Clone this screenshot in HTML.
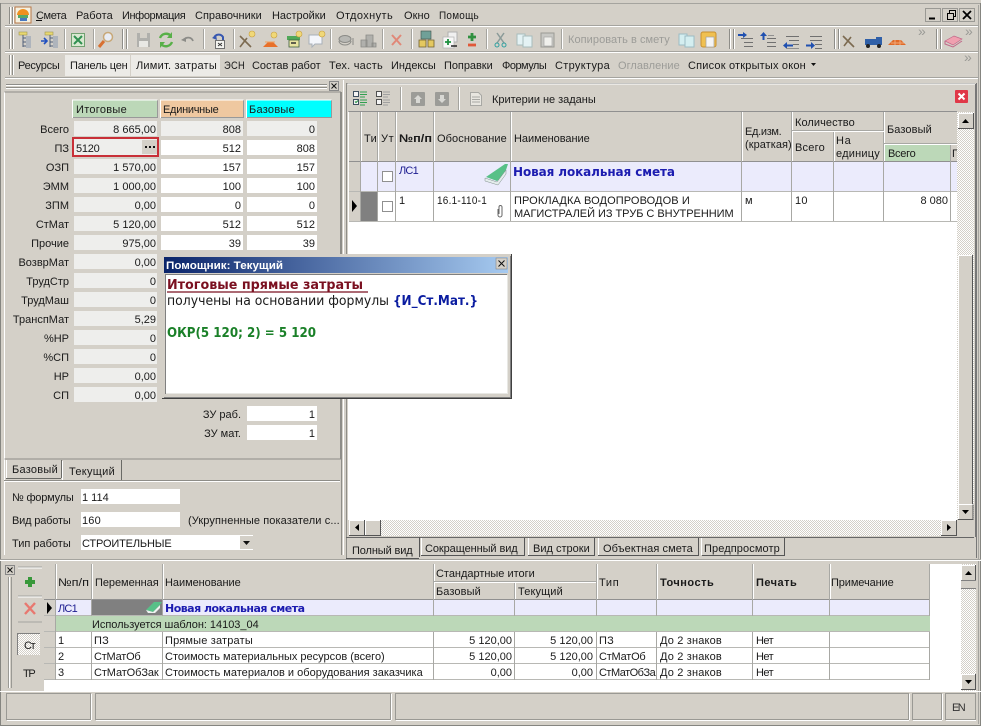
<!DOCTYPE html>
<html><head><meta charset="utf-8"><style>
html,body{margin:0;padding:0;background:#d4d0c8;width:981px;height:726px;overflow:hidden}
svg{display:block}
text{font-family:"Liberation Sans",sans-serif;font-size:11px;letter-spacing:.28px;fill:#1a1a1a;white-space:pre}
.e{text-anchor:end;letter-spacing:0}.b{font-weight:bold}
.d{font-family:"DejaVu Sans",sans-serif;font-size:13px;letter-spacing:0}
.db{font-family:"DejaVu Sans",sans-serif;font-weight:bold;font-size:12px;letter-spacing:0}
</style></head><body>
<svg width="981" height="726" viewBox="0 0 981 726" xmlns="http://www.w3.org/2000/svg">
<defs>
<pattern id="ck" width="2" height="2" patternUnits="userSpaceOnUse"><rect width="2" height="2" fill="#fff"/><rect width="1" height="1" fill="#d4d0c8"/><rect x="1" y="1" width="1" height="1" fill="#d4d0c8"/></pattern>
<linearGradient id="tb"><stop offset="0" stop-color="#0a246a"/><stop offset="1" stop-color="#a6caf0"/></linearGradient>
</defs>
<rect width="981" height="726" fill="#d4d0c8"/>
<!-- window edges -->
<path d="M0 3.500H981" stroke="#a5a49f"/>
<path d="M.5 726V3M980.500 3V726M0 725.500H981" stroke="#858580" fill="none"/>
<path d="M978.500 5V724" stroke="#a5a49f"/>
<!-- toolbar separators -->
<path d="M5 25.500H978M5 51.500H978M5 77.500H978" stroke="#a5a49f"/>
<path d="M5 26.500H978M5 52.500H978M5 78.500H978" stroke="#fff"/>
<!-- grips -->
<path d="M9.500 7V24M12.500 7V24M9.500 29V49M12.500 29V49M122.500 29V49M126.500 29V49M9.500 55V75M12.500 55V75M729.500 29V49M733.500 29V49M834.500 29V49M838.500 29V49M936.500 29V49M940.500 29V49" stroke="#8e8d88" stroke-width="1"/>
<path d="M10.500 7V24M13.500 7V24M10.500 29V49M13.500 29V49M123.500 29V49M127.500 29V49M10.500 55V75M13.500 55V75M730.500 29V49M734.500 29V49M835.500 29V49M839.500 29V49M937.500 29V49M941.500 29V49" stroke="#fff"/>
<!-- logo -->
<rect x="15" y="7" width="16" height="16" fill="#f4f0e0" stroke="#b87848"/>
<path d="M17 15a6 6 0 0 1 12 0z" fill="#f09020"/><path d="M18 15h10v3h-10z" fill="#58a868"/><path d="M20 18h7v3h-7z" fill="#4878c0"/>
<!-- menu -->
<text x="36" y="19" textLength="31">Смета</text><path d="M36 20.500H42" stroke="#111"/>
<text x="76" y="19" textLength="37">Работа</text>
<text x="122" y="19" textLength="64">Информация</text>
<text x="195" y="19" textLength="67">Справочники</text>
<text x="272" y="19" textLength="54">Настройки</text>
<text x="336" y="19" textLength="57">Отдохнуть</text>
<text x="404" y="19" textLength="26">Окно</text>
<text x="439" y="19" textLength="40" lengthAdjust="spacingAndGlyphs">Помощь</text>
<!-- window buttons -->
<g fill="#d4d0c8" stroke="#9a9994"><rect x="925.500" y="8.500" width="15" height="13"/><rect x="942.500" y="8.500" width="15" height="13"/><rect x="959.500" y="8.500" width="15" height="13"/></g>
<path d="M929 18.500h6" stroke="#000" stroke-width="2"/>
<path d="M947.500 13.500h6v6h-6zM949.500 13v-2.500h6v6h-2" stroke="#000" fill="none"/>
<path d="M963 11l8 8M971 11l-8 8" stroke="#000" stroke-width="1.800"/>
<!-- toolbar 1 small seps -->
<path d="M64.500 29V49M93.500 29V49M203.500 29V49M233.500 29V49M330.500 29V49M382.500 29V49M411.500 29V49M486.500 29V49M561.500 29V49" stroke="#a5a49f"/>
<path d="M65.500 29V49M94.500 29V49M204.500 29V49M234.500 29V49M331.500 29V49M383.500 29V49M412.500 29V49M487.500 29V49M562.500 29V49" stroke="#fff"/>
<!-- icons row 1 -->
<g fill="none">
<rect x="19" y="32" width="8" height="3" fill="#e8d870" stroke="#a09850" stroke-width=".6"/><path d="M23 35V47M23 38h3M23 42h3M23 46h3" stroke="#50607a"/><path d="M26 37h5M26 39h5M26 41h5M26 43h5M26 45h5M26 47h5" stroke="#8898b0"/>
<rect x="45" y="32" width="8" height="3" fill="#e8d870" stroke="#a09850" stroke-width=".6"/><path d="M50 35V47M50 38h3M50 42h3M50 46h3" stroke="#50607a"/><path d="M53 37h5M53 39h5M53 41h5M53 43h5M53 45h5M53 47h5" stroke="#8898b0"/><path d="M41 41h5M44 38l3 3-3 3" stroke="#2050c0" stroke-width="1.600"/>
<rect x="71.500" y="33.500" width="13" height="13" fill="#d8e8d0" stroke="#70a070"/><path d="M74 36l8 8M82 36l-8 8" stroke="#309050" stroke-width="2"/>
<circle cx="108" cy="37" r="4.500" fill="#e8ecf4" stroke="#c8a878" stroke-width="1.500"/><path d="M104 41l-5 6" stroke="#d87030" stroke-width="3"/>
<path d="M137 33h13v14h-13z" fill="#b0b0ac"/><rect x="140" y="33" width="7" height="5" fill="#d4d0c8"/><rect x="139" y="41" width="9" height="6" fill="#e8e8e4"/>
<path d="M160 38a6.500 6.500 0 0 1 11-2M172 42a6.500 6.500 0 0 1-11 2" stroke="#58b048" stroke-width="2.400"/><path d="M172 32v6h-5zM160 48v-6h5z" fill="#58b048"/>
<path d="M184 40a5 5 0 0 1 9 1" stroke="#8c8c88" stroke-width="1.800"/><path d="M181 40l5-3v5z" fill="#8c8c88"/>
<path d="M214 38a5 5 0 0 1 9-1v4" stroke="#3858b0" stroke-width="2"/><path d="M212 38l4-3 1 5z" fill="#3858b0"/><rect x="215.500" y="40.500" width="9" height="8" fill="#f4f4f0" stroke="#707070"/><path d="M218 43l4 3M222 43l-4 3" stroke="#333"/>
<path d="M240 36l11 11M240 47l7-9" stroke="#7c6a50" stroke-width="1.600"/><circle cx="252" cy="34" r="3" fill="#f0d878" stroke="#c8a040" stroke-width=".6"/>
<path d="M263 47l5-5h5l5 5z" fill="#e8702a"/><path d="M265 42h10" stroke="#f0a060"/><circle cx="274" cy="35" r="3" fill="#f0d878" stroke="#c8a040" stroke-width=".6"/>
<rect x="287" y="36" width="13" height="4" fill="#50a858"/><rect x="289" y="40" width="10" height="7" fill="#e8e4a0" stroke="#406040" stroke-width=".8"/><path d="M291 43h5" stroke="#333" stroke-width="1.500"/><circle cx="299" cy="34" r="3" fill="#f0d878" stroke="#c8a040" stroke-width=".6"/>
<path d="M309 35h13v9h-7l-3 3v-3h-3z" fill="#f4f6fb" stroke="#a8b0b8"/><circle cx="322" cy="34" r="3" fill="#f0d878" stroke="#c8a040" stroke-width=".6"/>
<ellipse cx="345" cy="39" rx="6" ry="3.500" fill="#b8b8b4" stroke="#8a8a86"/><path d="M339 41a6 4 0 0 0 12 0M353 38v7" stroke="#8a8a86"/>
<path d="M361 40h6v7h-6zM366 35h7v12h-7zM372 43h4v4h-4z" fill="#b0b0ac" stroke="#8a8a86" stroke-width=".8"/>
<path d="M392 35l9 10M401 35l-9 10" stroke="#e08878" stroke-width="2"/>
<rect x="421" y="31" width="10" height="8" fill="#70a098" stroke="#405048" stroke-width=".6"/><path d="M419 40h7v7h-7zM428 40h6v7h-6z" fill="#e4c860" stroke="#706030" stroke-width=".8"/>
<rect x="448" y="32" width="9" height="10" fill="#f0f0f0" stroke="#b0b0b0"/><rect x="443" y="37" width="11" height="11" fill="#f8f8f8" stroke="#b0b0b0" stroke-width=".7"/><path d="M445 42h6M448 39v6" stroke="#209040" stroke-width="1.800"/><path d="M451 46h6" stroke="#303030" stroke-width="1.600"/>
<path d="M468 37h8M472 33v8" stroke="#309040" stroke-width="2.800"/><path d="M468 45h8" stroke="#e05838" stroke-width="2.800"/>
<path d="M497 33l7 10M504 33l-7 10" stroke="#8a9a98" stroke-width="1.500"/><circle cx="497" cy="45" r="2" stroke="#30a0a0"/><circle cx="504" cy="45" r="2" stroke="#30a0a0"/>
<rect x="517" y="34" width="8" height="11" fill="#e4f2f4" stroke="#a8bcbc"/><rect x="523" y="36" width="9" height="11" fill="#e4f2f4" stroke="#a8bcbc"/>
<rect x="541" y="33" width="13" height="14" fill="#c8c8c4" stroke="#9a9a95"/><rect x="544" y="37" width="8" height="9" fill="#f0f0ec" stroke="#a5a5a5" stroke-width=".7"/>
<rect x="679" y="34" width="8" height="11" fill="#d4eef0" stroke="#9cbcc4"/><rect x="685" y="36" width="9" height="11" fill="#d4eef0" stroke="#9cbcc4"/>
<rect x="701" y="32" width="15" height="15" rx="2" fill="#f0c050" stroke="#c89030"/><rect x="706" y="37" width="8" height="10" fill="#f4f4f4" stroke="#a0a0a0" stroke-width=".7"/>
<!-- indent icons -->
<path d="M741 38.500h12M744 42.500h9M744 46.500h9" stroke="#707070"/><path d="M738 35h6" stroke="#2050b0" stroke-width="2"/><path d="M743 32v6l4-3z" fill="#2050b0"/>
<path d="M767 38.500h9M767 42.500h9M767 46.500h9" stroke="#707070"/><path d="M763.500 40v-5" stroke="#2050b0" stroke-width="2"/><path d="M760 36l3.500-4 3.500 4z" fill="#2050b0"/><path d="M768 35.500h6" stroke="#909090"/>
<path d="M786 36.500h13M789 40.500h10M793 44.500h6" stroke="#707070"/><path d="M786 45.500h7" stroke="#2050b0" stroke-width="2"/><path d="M787 42v7l-4-3.500z" fill="#2050b0"/><path d="M786 48.500h13" stroke="#909090"/>
<path d="M810 36.500h12M810 40.500h12M815 44.500h7M815 48.500h7" stroke="#707070"/><path d="M806 45.500h6" stroke="#2050b0" stroke-width="2"/><path d="M811 42v7l4-3.500z" fill="#2050b0"/>
<path d="M843 36l11 11M844 46l7-9" stroke="#7c6a50" stroke-width="1.600"/>
<rect x="865" y="39" width="11" height="6" fill="#3060a8"/><rect x="876" y="37" width="6" height="8" fill="#3060a8"/><circle cx="868" cy="46" r="2" fill="#222"/><circle cx="879" cy="46" r="2" fill="#222"/>
<path d="M888 45l5-5h8l5 5z" fill="#e06a28"/><path d="M891 43h13M895 40v5M900 40v5" stroke="#f0a878"/>
<path d="M945 41l9-5 8 3-9 6z" fill="#f0a0b0" stroke="#c06888" stroke-width=".7"/><path d="M945 41v3l8 3 9-6" stroke="#c06888"/>
</g>
<text x="568" y="43" textLength="102" style="fill:#9c9c98">Копировать в смету</text>
<text x="918" y="36" style="fill:#9a9a96;font-size:14px">»</text><text x="965" y="36" style="fill:#9a9a96;font-size:14px">»</text>
<text x="964" y="62" style="fill:#9a9a96;font-size:14px">»</text>
<!-- row 3 -->
<rect x="65" y="55" width="65" height="21" fill="#ecebe7"/><rect x="131" y="55" width="89" height="21" fill="#ecebe7"/>
<text x="18" y="69" textLength="42">Ресурсы</text>
<text x="70" y="69" textLength="58">Панель цен</text>
<text x="136" y="69" textLength="81">Лимит. затраты</text>
<text x="224" y="69" textLength="21" lengthAdjust="spacingAndGlyphs">ЭСН</text>
<text x="252" y="69" textLength="69">Состав работ</text>
<text x="329" y="69" textLength="54">Тех. часть</text>
<text x="391" y="69" textLength="45">Индексы</text>
<text x="444" y="69" textLength="49">Поправки</text>
<text x="502" y="69" textLength="45">Формулы</text>
<text x="555" y="69" textLength="55">Структура</text>
<text x="618" y="69" textLength="62" style="fill:#9c9c98">Оглавление</text>
<text x="688" y="69" textLength="118">Список открытых окон</text>
<path d="M811 63h5l-2.500 3z" fill="#111"/>
<!-- left panel -->
<path d="M6 84.500H327M6 87.500H327" stroke="#8e8d88"/><path d="M6 85.500H327M6 88.500H327" stroke="#fff"/>
<rect x="329.500" y="81.500" width="9" height="9" fill="#d4d0c8" stroke="#888"/><path d="M331.500 83.500l5 5M336.500 83.500l-5 5" stroke="#111"/>
<path d="M4.500 92V555" stroke="#fff" fill="none"/>
<path d="M4.500 92H340.500V459H4.500" stroke="#8e8d88" fill="none"/>
<path d="M341.500 92V555" stroke="#8e8d88"/>
<path d="M343.500 80V555" stroke="#fff"/>
<rect x="72" y="100" width="86" height="18" fill="#bcd8b8"/><rect x="160" y="100" width="84" height="18" fill="#efc8a0"/><rect x="246" y="100" width="86" height="18" fill="#00ffff"/>
<path d="M72 117.500h86M160 117.500h84M246 117.500h86M157.500 100v18M243.500 100v18M331.500 100v18" stroke="#999"/>
<path d="M72.500 118v-18h85M160.500 118v-18h83M246.500 118v-18h85" stroke="#fff" fill="none"/>
<text x="76" y="113" textLength="51">Итоговые</text><text x="163" y="113" textLength="56">Единичные</text><text x="249" y="113" textLength="46">Базовые</text>
<!-- field rows -->
<g fill="#eeeeec">
<rect x="74" y="121" width="83" height="15"/><rect x="161" y="121" width="82" height="15"/><rect x="247" y="121" width="70" height="15"/>
<rect x="74" y="159" width="83" height="15"/><rect x="74" y="178" width="83" height="15"/><rect x="74" y="197" width="83" height="15"/><rect x="74" y="216" width="83" height="15"/><rect x="74" y="235" width="83" height="15"/><rect x="74" y="254" width="83" height="15"/><rect x="74" y="273" width="83" height="15"/><rect x="74" y="292" width="83" height="15"/><rect x="74" y="311" width="83" height="15"/><rect x="74" y="330" width="83" height="15"/><rect x="74" y="349" width="83" height="15"/><rect x="74" y="368" width="83" height="15"/><rect x="74" y="387" width="83" height="15"/>
</g>
<g fill="#fff">
<rect x="161" y="140" width="82" height="15"/><rect x="247" y="140" width="70" height="15"/>
<rect x="161" y="159" width="82" height="15"/><rect x="247" y="159" width="70" height="15"/>
<rect x="161" y="178" width="82" height="15"/><rect x="247" y="178" width="70" height="15"/>
<rect x="161" y="197" width="82" height="15"/><rect x="247" y="197" width="70" height="15"/>
<rect x="161" y="216" width="82" height="15"/><rect x="247" y="216" width="70" height="15"/>
<rect x="161" y="235" width="82" height="15"/><rect x="247" y="235" width="70" height="15"/>
<rect x="247" y="406" width="70" height="15"/><rect x="247" y="425" width="70" height="15"/>
</g>
<rect x="73" y="138" width="85" height="18" fill="#eeeeec" stroke="#c83038" stroke-width="2"/>
<rect x="142" y="140" width="15" height="14" fill="#d4d0c8"/><path d="M145 147h2M149 147h2M153 147h2" stroke="#111" stroke-width="2"/>
<text class="e" x="69" y="133">Всего</text><text class="e" x="69" y="152">ПЗ</text><text class="e" x="69" y="171">ОЗП</text><text class="e" x="69" y="190">ЭММ</text><text class="e" x="69" y="209">ЗПМ</text><text class="e" x="69" y="228">СтМат</text><text class="e" x="69" y="247">Прочие</text><text class="e" x="69" y="266">ВозврМат</text><text class="e" x="69" y="285">ТрудСтр</text><text class="e" x="69" y="304">ТрудМаш</text><text class="e" x="69" y="323">ТранспМат</text><text class="e" x="69" y="342">%НР</text><text class="e" x="69" y="361">%СП</text><text class="e" x="69" y="380">НР</text><text class="e" x="69" y="399">СП</text>
<text class="e" x="241" y="418">ЗУ раб.</text><text class="e" x="241" y="437">ЗУ мат.</text>
<text class="e" x="156" y="133">8 665,00</text><text x="76" y="152" textLength="24">5120</text><text class="e" x="156" y="171">1 570,00</text><text class="e" x="156" y="190">1 000,00</text><text class="e" x="156" y="209">0,00</text><text class="e" x="156" y="228">5 120,00</text><text class="e" x="156" y="247">975,00</text><text class="e" x="156" y="266">0,00</text><text class="e" x="156" y="285">0</text><text class="e" x="156" y="304">0</text><text class="e" x="156" y="323">5,29</text><text class="e" x="156" y="342">0</text><text class="e" x="156" y="361">0</text><text class="e" x="156" y="380">0,00</text><text class="e" x="156" y="399">0,00</text>
<text class="e" x="241" y="133">808</text><text class="e" x="241" y="152">512</text><text class="e" x="241" y="171">157</text><text class="e" x="241" y="190">100</text><text class="e" x="241" y="209">0</text><text class="e" x="241" y="228">512</text><text class="e" x="241" y="247">39</text>
<text class="e" x="315" y="133">0</text><text class="e" x="315" y="152">808</text><text class="e" x="315" y="171">157</text><text class="e" x="315" y="190">100</text><text class="e" x="315" y="209">0</text><text class="e" x="315" y="228">512</text><text class="e" x="315" y="247">39</text><text class="e" x="315" y="418">1</text><text class="e" x="315" y="437">1</text>
<!-- left tabs -->
<path d="M6 478.500H61M61.500 460V478M62 480.500H121M121.500 460V480" stroke="#6a6a66" fill="none"/>
<path d="M6.500 460V478M62.500 461V480" stroke="#fff"/>
<text x="12" y="473" textLength="46">Базовый</text><text x="69" y="475" textLength="46">Текущий</text>
<path d="M4 480.500H340" stroke="#8e8d88"/><path d="M4 481.500H340" stroke="#fff"/>
<rect x="81" y="489" width="99" height="15" fill="#fff"/><rect x="81" y="512" width="99" height="15" fill="#fff"/><rect x="81" y="535" width="172" height="15" fill="#fff"/>
<rect x="240" y="536" width="13" height="13" fill="#d4d0c8"/><path d="M243 541h7l-3.500 4z" fill="#111"/>
<text x="12" y="501" textLength="62">№ формулы</text><text x="12" y="524" textLength="59">Вид работы</text><text x="12" y="547" textLength="59">Тип работы</text>
<text x="82" y="501" textLength="27">1 114</text><text x="82" y="524" textLength="19">160</text><text x="82" y="547" textLength="90">СТРОИТЕЛЬНЫЕ</text>
<text x="188" y="524" textLength="152">(Укрупненные показатели с...</text>
<!-- right panel top -->
<path d="M346.500 83.500H975M346.500 83V558" stroke="#8e8d88" fill="none"/>
<path d="M347.500 84H975" stroke="#fff"/>
<path d="M400.500 87V110M458.500 87V110" stroke="#a5a49f"/><path d="M401.500 87V110M459.500 87V110" stroke="#fff"/>
<g fill="none">
<path d="M353.500 91.500h5v5h-5zM353.500 99.500h5v5h-5z" stroke="#405060" fill="#f4f4f4"/><path d="M355 101.500l1 1 2-2" stroke="#209040"/><path d="M360 92h7M360 94.500h7M360 97h5M360 100h7M360 102.500h7M360 105h5" stroke="#30a050"/>
<path d="M376.500 91.500h5v5h-5zM376.500 99.500h5v5h-5z" stroke="#505050" fill="#f4f4f4"/><path d="M383 92h7M383 94.500h7M383 97h5M383 100h7M383 102.500h7M383 105h5" stroke="#a0a0a0"/>
<rect x="411" y="92" width="14" height="14" rx="1" fill="#9c9c98"/><path d="M418 95l4 4h-2v4h-4v-4h-2z" fill="#d8d8d4"/>
<rect x="435" y="92" width="14" height="14" rx="1" fill="#9c9c98"/><path d="M442 103l4-4h-2v-4h-4v4h-2z" fill="#d8d8d4"/>
<path d="M470.500 92.500h8l3 3v10h-11z" fill="#e8e6e0" stroke="#a8a8a4"/><path d="M472 97h8M472 99.500h8M472 102h8" stroke="#a8a8a4"/>
</g>
<text x="492" y="103" textLength="104">Критерии не заданы</text>
<rect x="955" y="90" width="13" height="13" rx="1" fill="#e03848"/><path d="M958.500 93.500l6 6M964.500 93.500l-6 6" stroke="#fff" stroke-width="2"/>
<!-- right grid -->
<rect x="348" y="112" width="609" height="408" fill="#fff"/>
<rect x="349" y="112" width="608" height="50" fill="#d4d0c8"/>
<rect x="885" y="144" width="66" height="18" fill="#bcd8b8"/>
<rect x="361" y="162" width="596" height="29" fill="#ebebfc"/>
<rect x="349" y="162" width="12" height="29" fill="#d4d0c8"/><rect x="349" y="192" width="12" height="29" fill="#d4d0c8"/>
<rect x="361" y="192" width="17" height="29" fill="#808080"/>
<path d="M348.500 111.500H957M349 161.500H957" stroke="#909090"/>
<path d="M349 191.500H957M349 221.500H957" stroke="#b8b8b4"/>
<path d="M360.500 112V221M377.500 112V221M395.500 112V221M433.500 112V221M510.500 112V221M741.500 112V221M791.500 112V221M833.500 131V221M883.500 112V221M950.500 144V221" stroke="#a8a8a4"/>
<path d="M361.500 112V161M378.500 112V161M396.500 112V161M434.500 112V161M511.500 112V161M742.500 112V161M792.500 112V161M834.500 131V161M884.500 112V161" stroke="#fff"/>
<path d="M792 130.500H884M884 143.500H957" stroke="#a8a8a4"/><path d="M792 131.500H884M884 144.500H957" stroke="#fff"/>
<path d="M352 200v12l5-6z" fill="#000"/>
<rect x="382.500" y="171.500" width="10" height="10" fill="#fff" stroke="#909090"/><rect x="382.500" y="201.500" width="10" height="10" fill="#fff" stroke="#909090"/>
<text x="364" y="142" textLength="13">Ти</text><text x="381" y="142" textLength="13">Ут</text>
<text class="b" x="399" y="142" textLength="33" lengthAdjust="spacingAndGlyphs" style="letter-spacing:0">№п/п</text>
<text x="437" y="142" textLength="70">Обоснование</text><text x="514" y="142" textLength="76">Наименование</text>
<text x="745" y="135" textLength="37">Ед.изм.</text><text x="745" y="148" textLength="47">(краткая)</text>
<text x="795" y="126" textLength="60">Количество</text><text x="795" y="151" textLength="30">Всего</text>
<text x="836" y="144" textLength="15">На</text><text x="836" y="157" textLength="44">единицу</text>
<text x="887" y="133" textLength="45">Базовый</text><text x="888" y="157" textLength="28">Всего</text><text x="952" y="157">Г</text>
<text x="399" y="174" style="fill:#1c1c90" textLength="20">ЛС1</text>
<path d="M486 177L505 164h3L504 176l-7 5z" fill="#58c088"/><path d="M485 178l12 4 9-12v4l-8 11-13-4z" fill="#e4ecec" stroke="#80908c" stroke-width=".5"/>
<text class="db" x="513" y="176" style="fill:#1c1cb0" textLength="162">Новая локальная смета</text>
<text x="399" y="204">1</text><text x="437" y="204" textLength="50" lengthAdjust="spacingAndGlyphs">16.1-110-1</text>
<path d="M498 209v6a2 2 0 0 0 4 0v-8a1.500 1.500 0 0 0-3 0v7" stroke="#666" fill="none"/>
<text x="514" y="204" textLength="176">ПРОКЛАДКА ВОДОПРОВОДОВ И</text><text x="514" y="217" textLength="220">МАГИСТРАЛЕЙ ИЗ ТРУБ С ВНУТРЕННИМ</text>
<text x="745" y="204">м</text><text x="795" y="204">10</text><text class="e" x="948" y="204">8 080</text>
<!-- v scroll -->
<rect x="957" y="112" width="17" height="408" fill="url(#ck)"/>
<rect x="958" y="113" width="15" height="15" fill="#d4d0c8"/><path d="M958.500 128V113.500H973" stroke="#fff" fill="none"/><path d="M973.500 113V128.500H958" stroke="#555" fill="none"/><path d="M962 123h7l-3.500-4z" fill="#000"/>
<rect x="958" y="255" width="15" height="249" fill="#d4d0c8"/><path d="M958.500 504V255.500H973" stroke="#fff" fill="none"/><path d="M972.500 255V504" stroke="#555" fill="none"/>
<rect x="958" y="504" width="15" height="15" fill="#d4d0c8"/><path d="M958.500 519V504.500H973" stroke="#fff" fill="none"/><path d="M973 504.500V519.500H958" stroke="#555" fill="none"/><path d="M962 510h7l-3.500 4z" fill="#000"/>
<!-- h scroll -->
<rect x="349" y="520" width="608" height="16" fill="url(#ck)"/>
<rect x="349" y="520" width="16" height="16" fill="#d4d0c8"/><rect x="365" y="520" width="16" height="16" fill="#d4d0c8"/>
<rect x="941" y="520" width="16" height="16" fill="#d4d0c8"/>
<path d="M349.500 536V520.500H365M365.500 536V520.500H380M941.500 536V520.500H957" stroke="#fff" fill="none"/><path d="M364.500 520V535.500H349M380.500 520V535.500H365M956.500 520V535.500H941" stroke="#555" fill="none"/>
<path d="M359 524v7l-4-3.500zM947 524v7l4-3.500z" fill="#000"/>
<rect x="957" y="520" width="17" height="17" fill="#d4d0c8"/>
<path d="M346 537.500H974" stroke="#666"/><path d="M975.500 84V537M976.500 83V558" stroke="#777"/>
<!-- right tabs -->
<path d="M419.500 537V557M346 558.500H419" stroke="#555" fill="none"/>
<path d="M421 555.500H524.500V538M528 555.500H594.500V538M598 555.500H698.500V538M702 555.500H784.500V538" stroke="#555" fill="none"/>
<path d="M421.500 538V555M528.500 538V555M598.500 538V555M701.500 538V555" stroke="#fff"/>
<text x="352" y="554" textLength="61">Полный вид</text><text x="425" y="552" textLength="93">Сокращенный вид</text><text x="533" y="552" textLength="57">Вид строки</text><text x="603" y="552" textLength="90">Объектная смета</text><text x="704" y="552" textLength="76">Предпросмотр</text>
<path d="M0 559.500H981" stroke="#a5a49f"/><path d="M0 560.500H981" stroke="#fff"/>
<!-- bottom panel -->
<rect x="5.500" y="565.500" width="9" height="9" fill="#d4d0c8" stroke="#888"/><path d="M7.500 567.500l5 5M12.500 567.500l-5 5" stroke="#111"/>
<path d="M8.500 577V688M11.500 577V688" stroke="#9a9994"/><path d="M9.500 577V688" stroke="#fff"/>
<path d="M18 567h24M18 596h24M18 622h24" stroke="#a5a49f"/><path d="M18 568h24M18 597h24" stroke="#fff"/>
<path d="M25 582h10M30 577v10" stroke="#38983a" stroke-width="4"/>
<path d="M25 603l10 11M35 603l-10 11" stroke="#e87870" stroke-width="2.400"/>
<rect x="17" y="633" width="23" height="22" fill="url(#ck)"/><path d="M17.500 655V633.500H40" stroke="#808080" fill="none"/>
<text x="24" y="649" textLength="12">Ст</text><text x="23" y="677" textLength="13">ТР</text>
<!-- bottom grid -->
<rect x="44" y="564" width="917" height="127" fill="#fff"/>
<rect x="44" y="564" width="886" height="36" fill="#d4d0c8"/>
<rect x="44" y="600" width="11" height="80" fill="#d4d0c8"/>
<rect x="55" y="600" width="875" height="16" fill="#ebebfc"/>
<rect x="55" y="616" width="875" height="16" fill="#bcd8b8"/>
<rect x="92" y="600" width="70" height="16" fill="#808080"/>
<path d="M44 599.500H930" stroke="#909090"/>
<path d="M44 615.500H930M44 631.500H930M44 647.500H930M44 663.500H930M44 679.500H930" stroke="#b8b8b4"/>
<path d="M55.500 564V680M91.500 564V616M91.500 632V680M162.500 564V616M162.500 632V680M433.500 564V616M433.500 632V680M514.500 581V616M514.500 632V680M596.500 564V616M596.500 632V680M656.500 564V616M656.500 632V680M752.500 564V616M752.500 632V680M829.500 564V616M829.500 632V680M929.500 564V616M929.500 632V680" stroke="#a8a8a4"/>
<path d="M56.500 564V599M92.500 564V599M163.500 564V599M434.500 564V599M515.500 582V599M597.500 564V599M657.500 564V599M753.500 564V599M830.500 564V599" stroke="#fff"/>
<path d="M434 581.500H596" stroke="#a8a8a4"/><path d="M434 582.500H596" stroke="#fff"/>
<path d="M47 602v12l5-6z" fill="#000"/>
<text x="58" y="586" textLength="31" lengthAdjust="spacingAndGlyphs" style="letter-spacing:0">№п/п</text><text x="95" y="586" textLength="64">Переменная</text><text x="165" y="586" textLength="76">Наименование</text>
<text x="436" y="577" textLength="99">Стандартные итоги</text><text x="436" y="595" textLength="45">Базовый</text><text x="518" y="595" textLength="45">Текущий</text>
<text x="599" y="586" textLength="20">Тип</text><text class="b" x="660" y="586" textLength="54">Точность</text><text class="b" x="756" y="586" textLength="41">Печать</text><text x="831" y="586" textLength="63">Примечание</text>
<text x="58" y="612" style="fill:#1c1c90" textLength="20">ЛС1</text>
<path d="M146 610l8-8 8 0-3 4-6 6-7-2z" fill="#58c088"/><path d="M146 610l7 2 7-7v3l-5 5-7 0z" fill="#eef2f0"/>
<text class="db" x="165" y="612" style="fill:#1c1cb0;font-size:11px" textLength="140">Новая локальная смета</text>
<text x="92" y="628" textLength="167">Используется шаблон: 14103_04</text>
<text x="58" y="644">1</text><text x="58" y="660">2</text><text x="58" y="676">3</text>
<text x="94" y="644" textLength="15">ПЗ</text><text x="94" y="660" textLength="47">СтМатОб</text><text x="94" y="676" textLength="65">СтМатОбЗак</text>
<text x="165" y="644" textLength="88">Прямые затраты</text><text x="165" y="660" textLength="220">Стоимость материальных ресурсов (всего)</text><text x="165" y="676" textLength="258">Стоимость материалов и оборудования заказчика</text>
<text class="e" x="512" y="644">5 120,00</text><text class="e" x="512" y="660">5 120,00</text><text class="e" x="512" y="676">0,00</text>
<text class="e" x="593" y="644">5 120,00</text><text class="e" x="593" y="660">5 120,00</text><text class="e" x="593" y="676">0,00</text>
<text x="599" y="644" textLength="15">ПЗ</text><text x="599" y="660" textLength="47">СтМатОб</text><text x="599" y="676" textLength="57">СтМатОбЗа</text>
<text x="660" y="644" textLength="62">До 2 знаков</text><text x="660" y="660" textLength="62">До 2 знаков</text><text x="660" y="676" textLength="62">До 2 знаков</text>
<text x="756" y="644" textLength="18">Нет</text><text x="756" y="660" textLength="18">Нет</text><text x="756" y="676" textLength="18">Нет</text>
<!-- bottom scroll -->
<rect x="961" y="564" width="15" height="127" fill="url(#ck)"/>
<rect x="961" y="565" width="15" height="15" fill="#d4d0c8"/><path d="M965 575h7l-3.500-4z" fill="#000"/>
<rect x="961" y="580" width="15" height="8" fill="#d4d0c8"/><path d="M961 580.500H976M961 588.500H976" stroke="#808080"/>
<rect x="961" y="674" width="15" height="15" fill="#d4d0c8"/><path d="M965 680h7l-3.500 4z" fill="#000"/>
<path d="M961.500 689V674.500H976M961.500 580V565.500H976" stroke="#fff" fill="none"/><path d="M975.500 565V580M975.500 674V689.500H961" stroke="#555" fill="none"/>
<!-- status bar -->
<path d="M0 691.500H981" stroke="#fff"/>
<g fill="none" stroke="#9a9994"><rect x="6.500" y="693.500" width="84" height="26"/><rect x="95.500" y="693.500" width="295" height="26"/><rect x="395.500" y="693.500" width="513" height="26"/><rect x="912.500" y="693.500" width="29" height="26"/><rect x="945.500" y="693.500" width="30" height="26"/></g>
<path d="M7 720.500H91M91.500 694V720M96 720.500H391M391.500 694V720M396 720.500H909M909.500 694V720M913 720.500H942M942.500 694V720M946 720.500H976" stroke="#fff" fill="none"/>
<text x="952" y="711" textLength="14" style="fill:#333">EN</text>
<!-- popup -->
<rect x="162.500" y="254.500" width="349" height="143" fill="#d4d0c8" stroke="#d4d0c8"/>
<path d="M511.500 254V398.500H162" stroke="#404040" fill="none"/><path d="M510.500 256V397.500H164" stroke="#808080" fill="none"/>
<rect x="164" y="257" width="344" height="16" fill="url(#tb)"/>
<text x="166" y="269" class="b" style="fill:#fff;letter-spacing:0" textLength="117" lengthAdjust="spacingAndGlyphs">Помощник: Текущий</text>
<rect x="496" y="258" width="11" height="11" fill="#d4d0c8" stroke="#888" stroke-width=".6"/><path d="M498.500 260.500l6 6M504.500 260.500l-6 6" stroke="#111"/>
<rect x="166" y="275" width="341" height="118" fill="#fff"/>
<path d="M165.500 394V274.500H507" stroke="#808080" fill="none"/><path d="M507.500 275V393.500H166" stroke="#e8e8e4" fill="none"/>
<text class="db" x="167" y="289" style="fill:#7a1020;font-size:13px" textLength="196" lengthAdjust="spacingAndGlyphs">Итоговые прямые затраты</text><path d="M167 292H368" stroke="#7a1020" stroke-width="1.200"/>
<text class="d" x="167" y="305" textLength="222" lengthAdjust="spacingAndGlyphs">получены на основании формулы</text>
<text class="db" x="393" y="305" style="fill:#0a1ca0;font-size:13px" textLength="85" lengthAdjust="spacingAndGlyphs">{И_Ст.Мат.}</text>
<text class="db" x="167" y="337" style="fill:#1a8028;font-size:13px" textLength="149" lengthAdjust="spacingAndGlyphs">ОКР(5 120; 2) = 5 120</text>
</svg>
</body></html>
